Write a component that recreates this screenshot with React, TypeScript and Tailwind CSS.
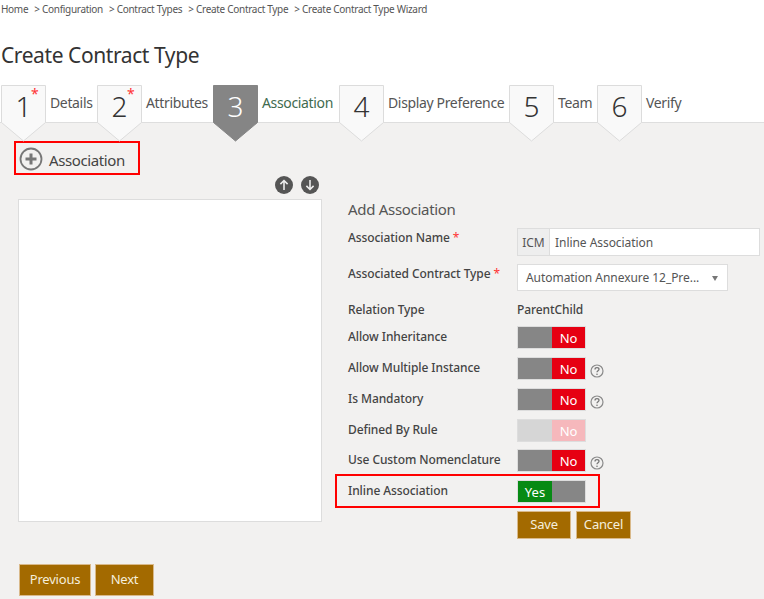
const crumbs = ["Configuration", "Contract Types", "Create Contract Type", "Create Contract Type Wizard"]

const steps = [
  { n: "1", label: "Details", req: true, w: "w-[96px]" },
  { n: "2", label: "Attributes", req: true, w: "w-[116px]" },
  { n: "3", label: "Association", req: false, active: true, w: "w-[126px]" },
  { n: "4", label: "Display Preference", req: false, w: "w-[170px]" },
  { n: "5", label: "Team", req: false, w: "w-[88px]" },
  { n: "6", label: "Verify", req: false, w: "w-[90px]" },
]

function Step({ n, label, req, active, w }: { n: string; label: string; req: boolean; active?: boolean; w: string }) {
  return (
    <div className={`flex items-start shrink-0 ${w}`}>
      <div className="relative w-[45px] h-[57px] shrink-0">
        <svg width="45" height="57" viewBox="0 0 45 57" className="absolute inset-0">
          <path
            d="M0.5 0.5H44.5V37.5L22.5 56L0.5 37.5Z"
            fill={active ? "#858585" : "#f9f9f9"}
            stroke={active ? "#858585" : "#dcdcdc"}
          />
        </svg>
        <span className={`relative block text-center text-[28px] leading-[43px] font-light ${active ? "text-white" : "text-[#333]"}`}>
          {n}
        </span>
        {req && <span className="absolute left-[30px] top-[-1px] text-[14px] leading-[20px] text-[#f33]">*</span>}
      </div>
      <span className={`ml-[4px] text-[14px] leading-[36px] tracking-[-0.35px] whitespace-nowrap ${active ? "text-[#3f6b4f]" : "text-[#555]"}`}>
        {label}
      </span>
    </div>
  )
}

function Help() {
  return (
    <svg width="14" height="14" viewBox="0 0 14 14" className="ml-[4px] mt-[7px]">
      <circle cx="7" cy="7" r="6" fill="none" stroke="#8a8a8a" strokeWidth="1.2" />
      <path d="M5 5.4C5 4.2 5.9 3.6 7 3.6s2 .7 2 1.7c0 1.5-2 1.5-2 3" fill="none" stroke="#777" strokeWidth="1.3" />
      <circle cx="7" cy="10.2" r=".8" fill="#777" />
    </svg>
  )
}

function Toggle({ yes, disabled }: { yes?: boolean; disabled?: boolean }) {
  const grey = disabled ? "bg-[#d6d6d6]" : "bg-[#868686]"
  return (
    <div className="flex w-[69px] h-[23px] border border-[#ddd] text-[13px] leading-[23px] text-center text-white shrink-0">
      {yes ? (
        <>
          <div className="w-[34px] bg-[#078a14]">Yes</div>
          <div className={`flex-1 ${grey}`} />
        </>
      ) : (
        <>
          <div className={`w-[34px] ${grey}`} />
          <div className={`flex-1 ${disabled ? "bg-[#f6b8bc]" : "bg-[#e60012]"}`}>No</div>
        </>
      )}
    </div>
  )
}

function Label({ text, req, w = "w-[169px]", pt = "pt-[2px]" }: { text: string; req?: boolean; w?: string; pt?: string }) {
  return (
    <div className={`${w} ${pt} shrink-0 text-[12px] leading-[18px] tracking-[-0.08px] font-medium text-[#444] whitespace-nowrap`}>
      {text}
      {req && <span className="text-[#f33] font-normal"> *</span>}
    </div>
  )
}

function ToggleRow({ text, help, disabled, mb = "mb-[8px]" }: { text: string; help?: boolean; disabled?: boolean; mb?: string }) {
  return (
    <div className={`flex h-[23px] ${mb}`}>
      <Label text={text} />
      <Toggle disabled={disabled} />
      {help && <Help />}
    </div>
  )
}

function BrownButton({ text, w, h }: { text: string; w: string; h: string }) {
  return (
    <button className={`${w} ${h} bg-[#a36a00] border border-[#d9b98a] text-[#f5eedd] text-[13px] tracking-[-0.2px]`}>{text}</button>
  )
}

export default function App() {
  return (
    <main className="w-[764px] h-[599px] overflow-hidden bg-white font-['Noto_Sans',sans-serif]">
      <nav className="flex h-[18px] pl-[1px] text-[10px] leading-[18px] tracking-[-0.3px] text-[#555] whitespace-nowrap">
        <span>Home</span>
        {crumbs.map((c) => (
          <span key={c} className="ml-[6px]">
            &gt; {c}
          </span>
        ))}
      </nav>

      <h1 className="mt-[22px] h-[45px] pl-[1px] text-[21px] leading-[30px] tracking-[-0.42px] font-normal text-[#333]">
        Create Contract Type
      </h1>

      <div className="flex pl-[1px] h-[38px] border-b border-[#dedede]">
        {steps.map((s) => (
          <Step key={s.n} {...s} />
        ))}
      </div>

      <section className="flex h-[476px] bg-[#f2f1f0]">
        <div className="w-[335px] shrink-0 pl-[18px]">
          <div className="-ml-[4px] mt-[18px] flex items-center w-[126px] h-[34px] border-2 border-[#f00]">
            <svg width="24" height="24" viewBox="0 0 24 24" className="ml-[3px] mt-[2px]">
              <circle cx="12" cy="12" r="10.5" fill="none" stroke="#777" strokeWidth="1.8" />
              <path d="M12 6.5v11M6.5 12h11" stroke="#777" strokeWidth="3" />
            </svg>
            <span className="ml-[6px] mt-[5px] text-[15px] tracking-[-0.4px] text-[#444]">Association</span>
          </div>

          <div className="flex justify-end gap-[8px] w-[301px] mt-[1px] mb-[5px]">
            {["M8 12.5V4M4.8 7.2L8 4l3.2 3.2", "M8 3.5V12M4.8 8.8L8 12l3.2-3.2"].map((d) => (
              <svg key={d} width="18" height="18" viewBox="0 0 16 16">
                <circle cx="8" cy="8" r="8" fill="#555" />
                <path d={d} fill="none" stroke="#eee" strokeWidth="1.4" />
              </svg>
            ))}
          </div>

          <div className="w-[304px] h-[323px] bg-white border border-[#ddd]" />

          <div className="flex gap-[4px] mt-[42px] ml-[1px]">
            <BrownButton text="Previous" w="w-[72px]" h="h-[32px]" />
            <BrownButton text="Next" w="w-[59px]" h="h-[32px]" />
          </div>
        </div>

        <div className="flex-1">
          <h2 className="ml-[13px] mt-[76px] h-[29px] text-[15px] leading-[20px] tracking-[-0.3px] text-[#555]">Add Association</h2>

          <div className="ml-[13px] flex h-[28px] mb-[8px]">
            <Label text="Association Name" req pt="pt-[1px]" />
            <div className="flex w-[243px] border border-[#ddd] bg-white text-[12px] leading-[27px] tracking-[-0.05px] text-[#555]">
              <span className="w-[32px] text-center bg-[#eee] border-r border-[#ddd]">ICM</span>
              <span className="pl-[5px]">Inline Association</span>
            </div>
          </div>

          <div className="ml-[13px] flex h-[27px] mb-[10px]">
            <Label text="Associated Contract Type" req pt="pt-[1px]" />
            <div className="flex items-center justify-between w-[211px] border border-[#ddd] bg-white pl-[8px] pr-[9px] text-[12px] tracking-[-0.05px] text-[#555] whitespace-nowrap">
              <span>Automation Annexure 12_Pre...</span>
              <span className="w-0 h-0 border-x-[3.5px] border-x-transparent border-t-[5px] border-t-[#777] mt-[2px]" />
            </div>
          </div>

          <div className="ml-[13px] flex h-[25px] text-[12px] leading-[18px]">
            <Label text="Relation Type" pt="pt-0" />
            <span className="font-medium tracking-[-0.08px] text-[#444]">ParentChild</span>
          </div>

          <div className="ml-[13px]">
            <ToggleRow text="Allow Inheritance" />
            <ToggleRow text="Allow Multiple Instance" help />
            <ToggleRow text="Is Mandatory" help />
            <ToggleRow text="Defined By Rule" disabled mb="mb-[7px]" />
            <ToggleRow text="Use Custom Nomenclature" help />
          </div>

          <div className="flex w-[265px] h-[34px] -mt-[6px] pl-[11px] pt-[4px] border-2 border-[#f00]">
            <Label text="Inline Association" />
            <Toggle yes />
          </div>

          <div className="flex gap-[5px] ml-[182px] mt-[3px]">
            <BrownButton text="Save" w="w-[54px]" h="h-[28px]" />
            <BrownButton text="Cancel" w="w-[55px]" h="h-[28px]" />
          </div>
        </div>
      </section>
    </main>
  )
}
